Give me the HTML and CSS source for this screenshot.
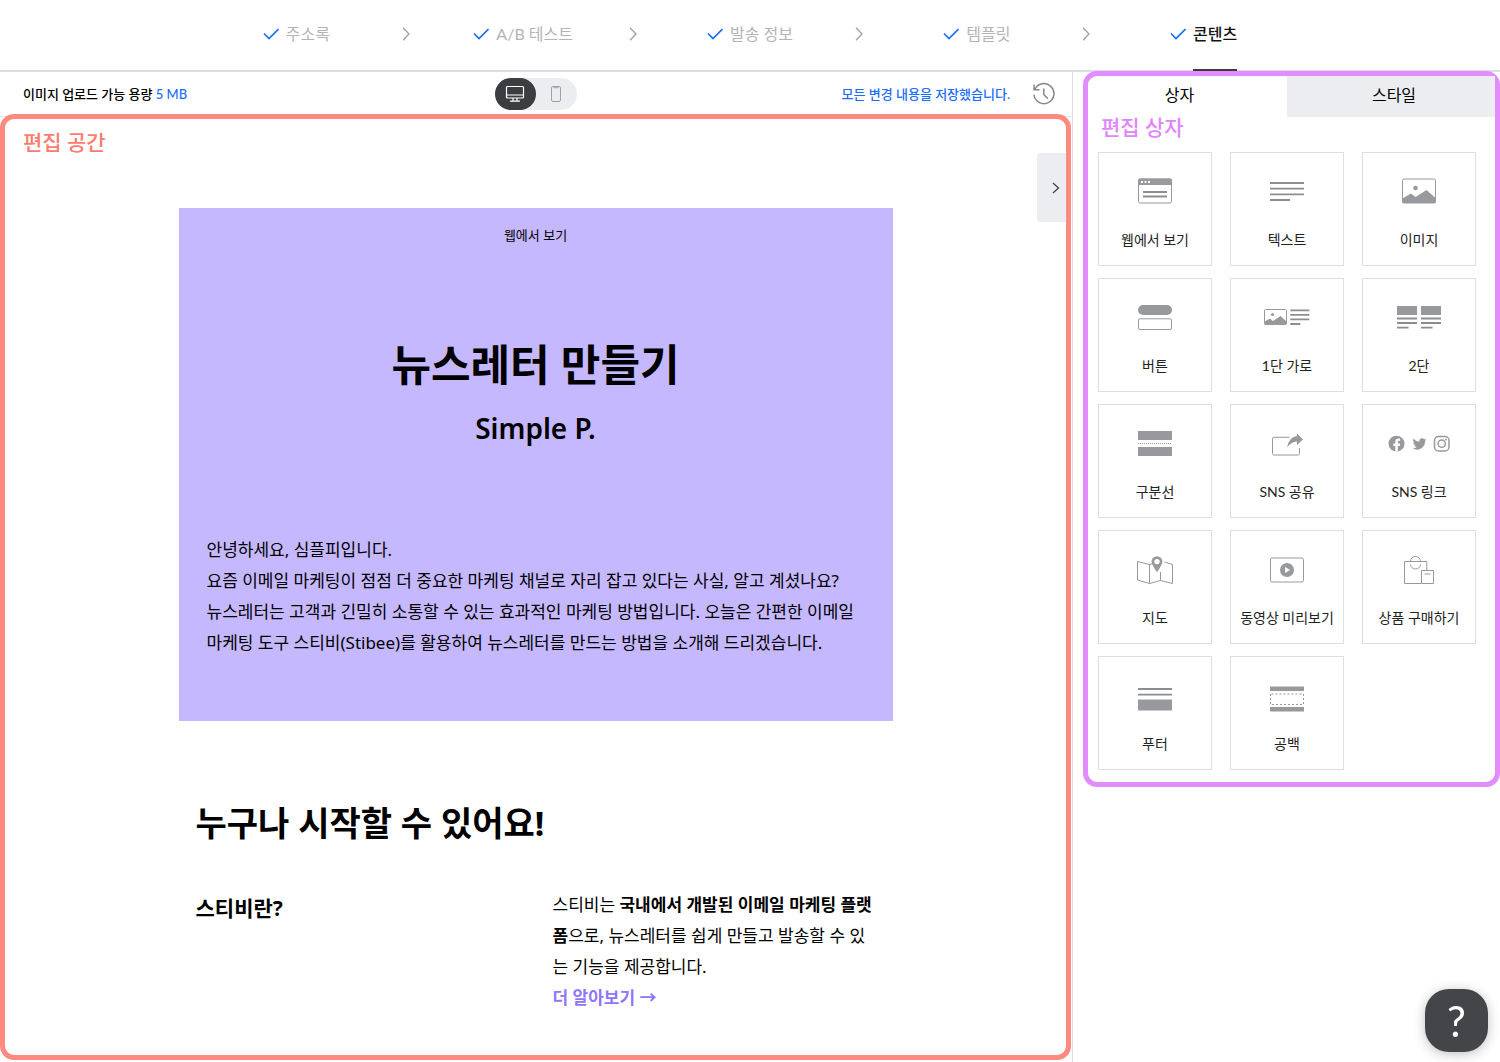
FILE: index.html
```html
<!DOCTYPE html>
<html lang="ko">
<head>
<meta charset="utf-8">
<meta name="viewport" content="width=device-width, initial-scale=1">
<title>뉴스레터 만들기</title>
<link rel="stylesheet" href="styles.css">
</head>
<body>
<svg class="defs" aria-hidden="true">
  <symbol id="check" viewBox="0 0 16 12"><path d="M1 5.500 6 10.500 15.500 1" fill="none" stroke="currentColor" stroke-width="1.700"/></symbol>
  <symbol id="chevron" viewBox="0 0 8 14"><path d="M1 .8 7 7 1 13.200" fill="none" stroke="currentColor" stroke-width="1.300"/></symbol>
</svg>

<header class="header">
  <ol class="steps">
    <li class="step"><a class="step-link" href="#"><svg class="check"><use href="#check"/></svg><span class="step-label">주소록</span></a><svg class="chevron"><use href="#chevron"/></svg></li>
    <li class="step"><a class="step-link" href="#"><svg class="check"><use href="#check"/></svg><span class="step-label">A/B 테스트</span></a><svg class="chevron"><use href="#chevron"/></svg></li>
    <li class="step"><a class="step-link" href="#"><svg class="check"><use href="#check"/></svg><span class="step-label">발송 정보</span></a><svg class="chevron"><use href="#chevron"/></svg></li>
    <li class="step"><a class="step-link" href="#"><svg class="check"><use href="#check"/></svg><span class="step-label">템플릿</span></a><svg class="chevron"><use href="#chevron"/></svg></li>
    <li class="step"><a class="step-link current" href="#" aria-current="step"><svg class="check"><use href="#check"/></svg><span class="step-label">콘텐츠</span></a></li>
  </ol>
</header>

<div class="workspace">
  <main class="editor">
    <div class="toolbar">
      <p class="quota">이미지 업로드 가능 용량 <span class="accent">5 MB</span></p>
      <div class="devices">
        <button class="device selected" type="button" aria-label="데스크톱" aria-pressed="true">
          <svg width="20" height="18" viewBox="0 0 20 18" fill="none" stroke="currentColor" stroke-width="1.200"><rect x="1.500" y="1.500" width="17" height="11.500" rx="1"/><path d="M1.500 10h17M8 13v3M12 13v3M5 16.200h10"/></svg>
        </button>
        <button class="device" type="button" aria-label="모바일" aria-pressed="false">
          <svg width="12" height="18" viewBox="0 0 12 18" fill="none" stroke="currentColor"><rect x="1.500" y="1.500" width="9" height="15" rx="1.500"/><path d="M4 1.500v1.200h4V1.500"/></svg>
        </button>
      </div>
      <div class="saved">
        <p class="accent">모든 변경 내용을 저장했습니다.</p>
        <button class="history" type="button" aria-label="변경 기록">
          <svg width="24" height="24" viewBox="0 0 24 24" fill="none" stroke="currentColor" stroke-width="1.500"><path d="M2.800 7.600A10 10 0 1 1 2 12.500M2 2.500v5.300h5.500M11.800 6.500v6l4 4.200"/></svg>
        </button>
      </div>
    </div>

    <section class="frame canvas">
      <h2 class="frame-title">편집 공간</h2>
      <button class="handle" type="button" aria-label="패널 접기"><svg width="8" height="12" viewBox="0 0 8 12" fill="none" stroke="currentColor" stroke-width="1.300"><path d="M1 1l5.500 5L1 11"/></svg></button>

      <article class="letter">
        <div class="hero">
          <a class="web-view" href="#">웹에서 보기</a>
          <h1 class="hero-title">뉴스레터 만들기</h1>
          <p class="hero-author">Simple P.</p>
          <p class="copy">안녕하세요, 심플피입니다.<br>요즘 이메일 마케팅이 점점 더 중요한 마케팅 채널로 자리 잡고 있다는 사실, 알고 계셨나요?<br>뉴스레터는 고객과 긴밀히 소통할 수 있는 효과적인 마케팅 방법입니다. 오늘은 간편한 이메일 마케팅 도구 스티비(Stibee)를 활용하여 뉴스레터를 만드는 방법을 소개해 드리겠습니다.</p>
        </div>
        <h2 class="section-title">누구나 시작할 수 있어요!</h2>
        <div class="columns">
          <h3 class="question">스티비란?</h3>
          <div class="copy">
            <p>스티비는 <strong>국내에서 개발된 이메일 마케팅 플랫폼</strong>으로, 뉴스레터를 쉽게 만들고 발송할 수 있는 기능을 제공합니다.</p>
            <a class="more" href="#">더 알아보기 →</a>
          </div>
        </div>
      </article>
    </section>
  </main>

  <aside class="frame panel">
    <div class="tabs" role="tablist">
      <button class="tab selected" type="button" role="tab" aria-selected="true">상자</button>
      <button class="tab" type="button" role="tab" aria-selected="false">스타일</button>
    </div>
    <h2 class="frame-title">편집 상자</h2>
    <div class="boxes">
      <button class="box" type="button">
        <svg class="icon" viewBox="0 0 64 40"><rect class="line" x="15.500" y="8" width="33" height="24" rx="1.500"/><path d="M15 9.500q0-2 2-2h30q2 0 2 2V14H15z"/><path class="hole" d="M18 10h2v2h-2zM21.500 10h2v2h-2zM25 10h2v2h-2z"/><path class="bar" d="M20 21h24M20 25.500h24"/></svg>웹에서 보기
      </button>
      <button class="box" type="button">
        <svg class="icon" viewBox="0 0 64 40"><path class="bar" d="M15 12h34M15 17.700h34M15 23.300h34M15 29h20"/></svg>텍스트
      </button>
      <button class="box" type="button">
        <svg class="icon" viewBox="0 0 64 40"><rect class="line" x="15.500" y="8" width="33" height="24" rx="1.500"/><circle cx="28.500" cy="17" r="2.300"/><path d="M15.500 27.500 24 22.500l4.500 3.500L39.500 19l9 8V32h-33z"/></svg>이미지
      </button>
      <button class="box" type="button">
        <svg class="icon" viewBox="0 0 64 40"><rect x="15" y="8" width="34" height="10" rx="5"/><rect class="line" x="15.500" y="21.800" width="33" height="10.700" rx="1.500"/></svg>버튼
      </button>
      <button class="box" type="button">
        <svg class="icon" viewBox="0 0 64 40"><rect class="line" x="9.500" y="12.500" width="22" height="15" rx="1.200"/><circle cx="17.500" cy="17.500" r="1.600"/><path d="M9.500 24.500l5.500-3 3 2.500L25.500 19l6 5.500v3h-22z"/><path class="bar" d="M35.300 13.300h19M35.300 17.800h19M35.300 22.400h19M35.300 27h10"/></svg>1단 가로
      </button>
      <button class="box" type="button">
        <svg class="icon" viewBox="0 0 64 40"><path d="M10 9h20v9H10zM34 9h20v9H34z"/><path class="bar" d="M10 21.500h20M10 26h20M10 30.700h11.500M34 21.500h20M34 26h20M34 30.700h11.500"/></svg>2단
      </button>
      <button class="box" type="button">
        <svg class="icon" viewBox="0 0 64 40"><path d="M15 8h34v9H15zM15 24h34v9H15z"/><path class="line" stroke-dasharray="1 1" d="M15 20.500h34"/></svg>구분선
      </button>
      <button class="box" type="button">
        <svg class="icon" viewBox="0 0 64 40"><path class="line" d="M34.500 14.300H19q-1.500 0-1.500 1.500v14.700q0 1.500 1.500 1.500h24q1.500 0 1.500-1.500V25"/><path d="M32 24.500q2-10.500 10-11.500V10.500l6 6-6 5.500v-3.500q-6 .5-10 6z"/></svg>SNS 공유
      </button>
      <button class="box" type="button">
        <svg class="icon" viewBox="0 0 64 40"><circle cx="9.500" cy="20.700" r="8"/><path class="hole" d="M8.300 28.700v-5.800h-2v-2.300h2v-1.800c0-2.200 1.200-3.300 3.100-3.300.8 0 1.500.1 1.800.2v2h-1.100c-1 0-1.300.6-1.300 1.300v1.600h2.300l-.4 2.300h-1.900v5.800z"/><path d="M39.400 15.600a5.800 5.800 0 0 1-1.600.4 2.800 2.800 0 0 0 1.200-1.500 5.600 5.600 0 0 1-1.800.7 2.800 2.800 0 0 0-4.800 2.600 8 8 0 0 1-5.800-3 2.800 2.800 0 0 0 .9 3.800 2.800 2.800 0 0 1-1.300-.4 2.800 2.800 0 0 0 2.300 2.800 2.800 2.800 0 0 1-1.300.1 2.800 2.800 0 0 0 2.600 2 5.700 5.700 0 0 1-4.200 1.200 8 8 0 0 0 12.400-7.200 5.800 5.800 0 0 0 1.400-1.500z" transform="translate(0 1)"/><rect class="line" x="47.500" y="13.500" width="14.500" height="14.500" rx="4" stroke-width="1.500"/><circle class="line" cx="54.700" cy="20.700" r="3.600" stroke-width="1.500"/><circle cx="59" cy="16.500" r=".9"/></svg>SNS 링크
      </button>
      <button class="box" type="button">
        <svg class="icon" viewBox="0 0 64 40"><path class="line" d="M31 14.500l-4.500 1-12-3V31l12 3.500 11-3 12 3V15.500l-8-2.500M26.500 15.500v19M37.500 23v8.500"/><path d="M34 7.200a5.400 5.400 0 0 1 5.400 5.400q0 3-5.400 10.700-5.400-7.700-5.400-10.700A5.400 5.400 0 0 1 34 7.200z"/><circle class="hole" cx="34" cy="12.600" r="2.700"/></svg>지도
      </button>
      <button class="box" type="button">
        <svg class="icon" viewBox="0 0 64 40"><rect class="line" x="15.500" y="9" width="33" height="24" rx="1.500"/><circle cx="32" cy="21" r="7"/><path class="hole" d="M30 18v6l5-3z"/></svg>동영상 미리보기
      </button>
      <button class="box" type="button">
        <svg class="icon" viewBox="0 0 64 40"><path class="line" d="M34.500 34.500h-17v-22h22.300v9M23.500 12.500a5 5 0 0 1 10 0M23.500 15.500a5 4.500 0 0 0 10 0M34.500 21.500h12v13h-12zM37.500 25h6"/></svg>상품 구매하기
      </button>
      <button class="box" type="button">
        <svg class="icon" viewBox="0 0 64 40"><path class="bar" d="M15 14h34M15 19.700h34"/><path d="M15 24.500h34v11H15z"/></svg>푸터
      </button>
      <button class="box" type="button">
        <svg class="icon" viewBox="0 0 64 40"><path d="M15 11.500h34v4.500H15zM15 32h34v4.500H15z"/><path class="line" stroke-dasharray="2 2" d="M15.500 19v10.500h33V19z"/></svg>공백
      </button>
    </div>
  </aside>
</div>

<button class="help" type="button" aria-label="도움말">?</button>
</body>
</html>
```

FILE: styles.css
```css
* { box-sizing: border-box; }

body {
  margin: 0;
  min-height: 100vh;
  display: flex;
  flex-direction: column;
  background: #fff;
  color: #000;
  font: 14px/20px Lato, "Noto Sans CJK KR", sans-serif;
}

h1, h2, h3, p, ol { margin: 0; padding: 0; }
a { color: inherit; text-decoration: none; }
button {
  margin: 0;
  padding: 0;
  border: 0;
  background: none;
  color: inherit;
  font: inherit;
  cursor: pointer;
}
svg { display: block; flex: none; }
.defs { position: absolute; width: 0; height: 0; }
.accent { color: #1a6dff; }

/* Progress steps */
.header {
  border-bottom: 2px solid #dcdce2;
}
.steps {
  display: grid;
  grid-template-columns: repeat(5, 1fr);
  align-items: start;
  max-width: 1134px;
  height: 70px;
  margin: 0 auto;
  list-style: none;
}
.step {
  display: grid;
  grid-template-columns: 8px 1fr 8px;
  align-items: center;
  height: 68px;
}
.step-link {
  grid-column: 2;
  display: flex;
  justify-content: center;
  align-items: center;
  gap: 7px;
  height: 68px;
  font-size: 16px;
  color: #b4b4b8;
}
.step-label {
  align-self: flex-start;
  display: flex;
  align-items: center;
  height: 71px;
  padding-bottom: 2px;
  border-bottom: 2px solid transparent;
}
.current { color: #111; font-weight: 500; }
.current .step-label { border-color: #3c3c40; }
.check { width: 16px; height: 12px; color: #1a6dff; }
.chevron { width: 8px; height: 14px; color: #a0a0a5; }

/* Workspace */
.workspace {
  flex: 1;
  display: grid;
  grid-template-columns: minmax(0, 1fr) 417px;
  gap: 10px;
}
.editor {
  display: flex;
  flex-direction: column;
  border-right: 1px solid #dcdce2;
  padding-right: 1px;
}
.toolbar {
  display: grid;
  grid-template-columns: 1fr auto 1fr;
  align-items: center;
  height: 45px;
  padding: 0 15px;
  border-bottom: 1px solid #e4e4e8;
  font-size: 13px;
  font-weight: 500;
}
.quota { padding-left: 8px; }
.devices {
  display: flex;
  border-radius: 16px;
  background: #ecedf1;
}
.device {
  display: grid;
  place-items: center;
  width: 41px;
  height: 32px;
  border-radius: 16px;
  color: #a0a0a5;
}
.device.selected { background: #3c3d41; color: #fff; }
.saved {
  display: flex;
  justify-content: flex-end;
  align-items: center;
  gap: 22px;
}
.history { color: #85868a; }

/* Outlined areas */
.frame {
  border: 5px solid;
  border-radius: 14px;
}
.frame-title {
  font-size: 21px;
  line-height: 28px;
  font-weight: 500;
}
.canvas {
  position: relative;
  flex: 1;
  margin: -3px 0 2px;
  padding: 9px 18px 40px;
  border-color: #ff8a80;
  background: #fff;
}
.canvas .frame-title { color: #ff7b70; }
.handle {
  position: absolute;
  top: 34px;
  right: 0;
  display: grid;
  place-items: center;
  width: 29px;
  height: 69px;
  padding-left: 8px;
  border-radius: 4px 0 0 4px;
  background: #ecedf1;
  color: #444;
}

/* Newsletter */
.letter {
  max-width: 714px;
  margin: 52px auto 0;
  font-family: "Noto Sans", "Noto Sans CJK KR", sans-serif;
}
.hero {
  display: flex;
  flex-direction: column;
  padding: 17px 28px 63px;
  background: #c5b8ff;
}
.web-view {
  align-self: center;
  font-size: 13px;
}
.hero-title {
  margin-top: 88px;
  font-size: 43px;
  line-height: 64px;
  text-align: center;
}
.hero-author {
  margin: 9px 0 84px;
  font-size: 28px;
  line-height: 44px;
  font-weight: 600;
  text-align: center;
}
.copy {
  font-size: 17px;
  line-height: 31px;
}
.section-title {
  margin: 77px 17px 41px;
  font-size: 34px;
  line-height: 50px;
}
.columns {
  display: grid;
  grid-template-columns: 1fr 1fr;
  gap: 34px;
  padding: 0 17px;
}
.question {
  font-size: 21px;
  line-height: 38px;
}
.more { color: #8f75ff; font-weight: 700; }

/* Box panel */
.panel {
  align-self: start;
  margin-top: -1px;
  padding-bottom: 12px;
  border-color: #e38cff;
  background: #fff;
}
.tabs {
  display: grid;
  grid-template-columns: 199px 1fr;
  height: 41px;
}
.tab {
  padding: 0 0 4px 6px;
  background: #ecedf1;
  font-size: 16px;
}
.tab.selected {
  padding: 0 16px 4px 0;
  background: none;
}
.panel .frame-title {
  margin: -4px 13px 0;
  color: #e184ff;
}
.boxes {
  display: grid;
  grid-template-columns: repeat(3, 114px);
  gap: 12px 18px;
  padding: 11px 10px 0;
}
.box {
  display: flex;
  flex-direction: column;
  align-items: center;
  gap: 19px;
  height: 114px;
  padding-top: 18px;
  border: 1px solid #dddde2;
  background: #fff;
  color: #222;
}
.icon {
  width: 64px;
  height: 40px;
  fill: #98999d;
  stroke: none;
}
.icon .line { fill: none; stroke: #98999d; }
.icon .bar { fill: none; stroke: #8c8d91; stroke-width: 1.8; }
.icon .hole { fill: #fff; }

.help {
  position: fixed;
  right: 12px;
  bottom: 10px;
  width: 63px;
  height: 63px;
  border-radius: 24px;
  background: #444549;
  box-shadow: 0 2px 12px rgba(0, 0, 0, .25);
  color: #fff;
  font-size: 42px;
  line-height: 60px;
}
```
